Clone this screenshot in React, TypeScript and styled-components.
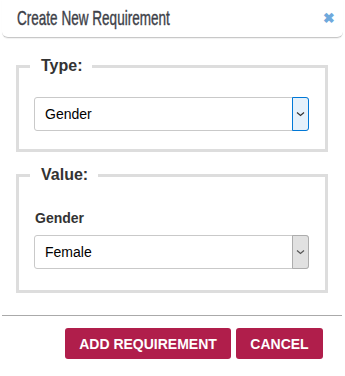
import React from "react";
import styled, { createGlobalStyle } from "styled-components";

const Global = createGlobalStyle`
  html, body { margin: 0; padding: 0; background: #fff; }
  body { font-family: "Liberation Sans", Arial, sans-serif; }
`;

const Dialog = styled.div`
  width: 345px;
  height: 376px;
  background: #fff;
  display: flex;
  flex-direction: column;
`;

const Header = styled.div`
  margin: 0 2px;
  height: 38px;
  box-sizing: border-box;
  border-bottom: 1px solid #c8c8c8;
  border-radius: 0 0 6px 6px;
  box-shadow: 0 1px 1px rgba(0, 0, 0, 0.06);
  display: flex;
  align-items: center;
  justify-content: space-between;
  padding: 0 8px 2px 15px;
`;

const Title = styled.h1`
  margin: 0;
  font-family: "Liberation Sans", Arial, sans-serif;
  font-weight: normal;
  font-size: 21px;
  color: #3d4148;
  display: inline-block;
  white-space: nowrap;
  transform: scaleX(0.645);
  transform-origin: left center;
  -webkit-text-stroke: 0.4px #3d4148;
`;

const Close = styled.span`
  color: #6fa9dc;
  font-size: 14px;
  font-weight: bold;
  display: flex;
  align-items: center;
`;

const Body = styled.div`
  padding: 19px 17px 0 16px;
  display: flex;
  flex-direction: column;
  gap: 14px;
`;

const Fieldset = styled.fieldset<{ $h: number }>`
  margin: 0;
  border: 3px solid #dddddd;
  padding: 0 16px 0 15px;
  height: ${(p) => p.$h}px;
  box-sizing: border-box;
`;

const Legend = styled.legend`
  margin-left: -4px;
  padding: 0 10px 0 11px;
  font-size: 16px;
  line-height: 18px;
  font-weight: bold;
  color: #333;
`;

const Label = styled.div`
  font-size: 14px;
  line-height: 16px;
  font-weight: bold;
  color: #333;
  margin: 26px 0 9px 1px;
`;

const Select = styled.div<{ $top: number }>`
  margin-top: ${(p) => p.$top}px;
  height: 34px;
  box-sizing: border-box;
  border: 1px solid #c9c9c9;
  border-radius: 3px;
  display: flex;
  align-items: stretch;
  background: #fff;
`;

const SelectText = styled.div`
  flex: 1;
  display: flex;
  align-items: center;
  padding-left: 10px;
  font-size: 14px;
  color: #000;
`;

const Arrow = styled.div<{ $focus?: boolean }>`
  width: 17px;
  box-sizing: border-box;
  margin: -1px -1px -1px 0;
  border: 1px solid ${(p) => (p.$focus ? "#0078d7" : "#adadad")};
  background: ${(p) => (p.$focus ? "#e5f1fb" : "#e1e1e1")};
  border-radius: 0 3px 3px 0;
  display: flex;
  align-items: center;
  justify-content: center;
`;

const Footer = styled.div`
  margin-top: 22px;
  margin-left: 2px;
  margin-right: 3px;
  border-top: 1px solid #aaa;
  padding: 12px 19px 0 0;
  display: flex;
  justify-content: flex-end;
  gap: 5px;
`;

const Button = styled.button<{ $w: number }>`
  width: ${(p) => p.$w}px;
  height: 31px;
  border: none;
  border-radius: 3px;
  background: #b01e4b;
  color: #fff;
  font-family: "Liberation Sans", Arial, sans-serif;
  font-weight: bold;
  font-size: 14px;
  padding: 0;
  cursor: pointer;
`;

const Chevron = ({ color }: { color: string }) => (
  <svg width="9" height="6" viewBox="0 0 9 6">
    <path d="M1 1.5 L4.5 4.5 L8 1.5" fill="none" stroke={color} strokeWidth="1.2" />
  </svg>
);

export default function App() {
  return (
    <>
      <Global />
      <Dialog>
        <Header>
          <Title>Create New Requirement</Title>
          <Close>✖</Close>
        </Header>
        <Body>
          <Fieldset $h={95}>
            <Legend>Type:</Legend>
            <Select $top={22}>
              <SelectText>Gender</SelectText>
              <Arrow $focus>
                <Chevron color="#333" />
              </Arrow>
            </Select>
          </Fieldset>
          <Fieldset $h={127}>
            <Legend>Value:</Legend>
            <Label>Gender</Label>
            <Select $top={0}>
              <SelectText>Female</SelectText>
              <Arrow>
                <Chevron color="#555" />
              </Arrow>
            </Select>
          </Fieldset>
        </Body>
        <Footer>
          <Button $w={166}>ADD REQUIREMENT</Button>
          <Button $w={87}>CANCEL</Button>
        </Footer>
      </Dialog>
    </>
  );
}
